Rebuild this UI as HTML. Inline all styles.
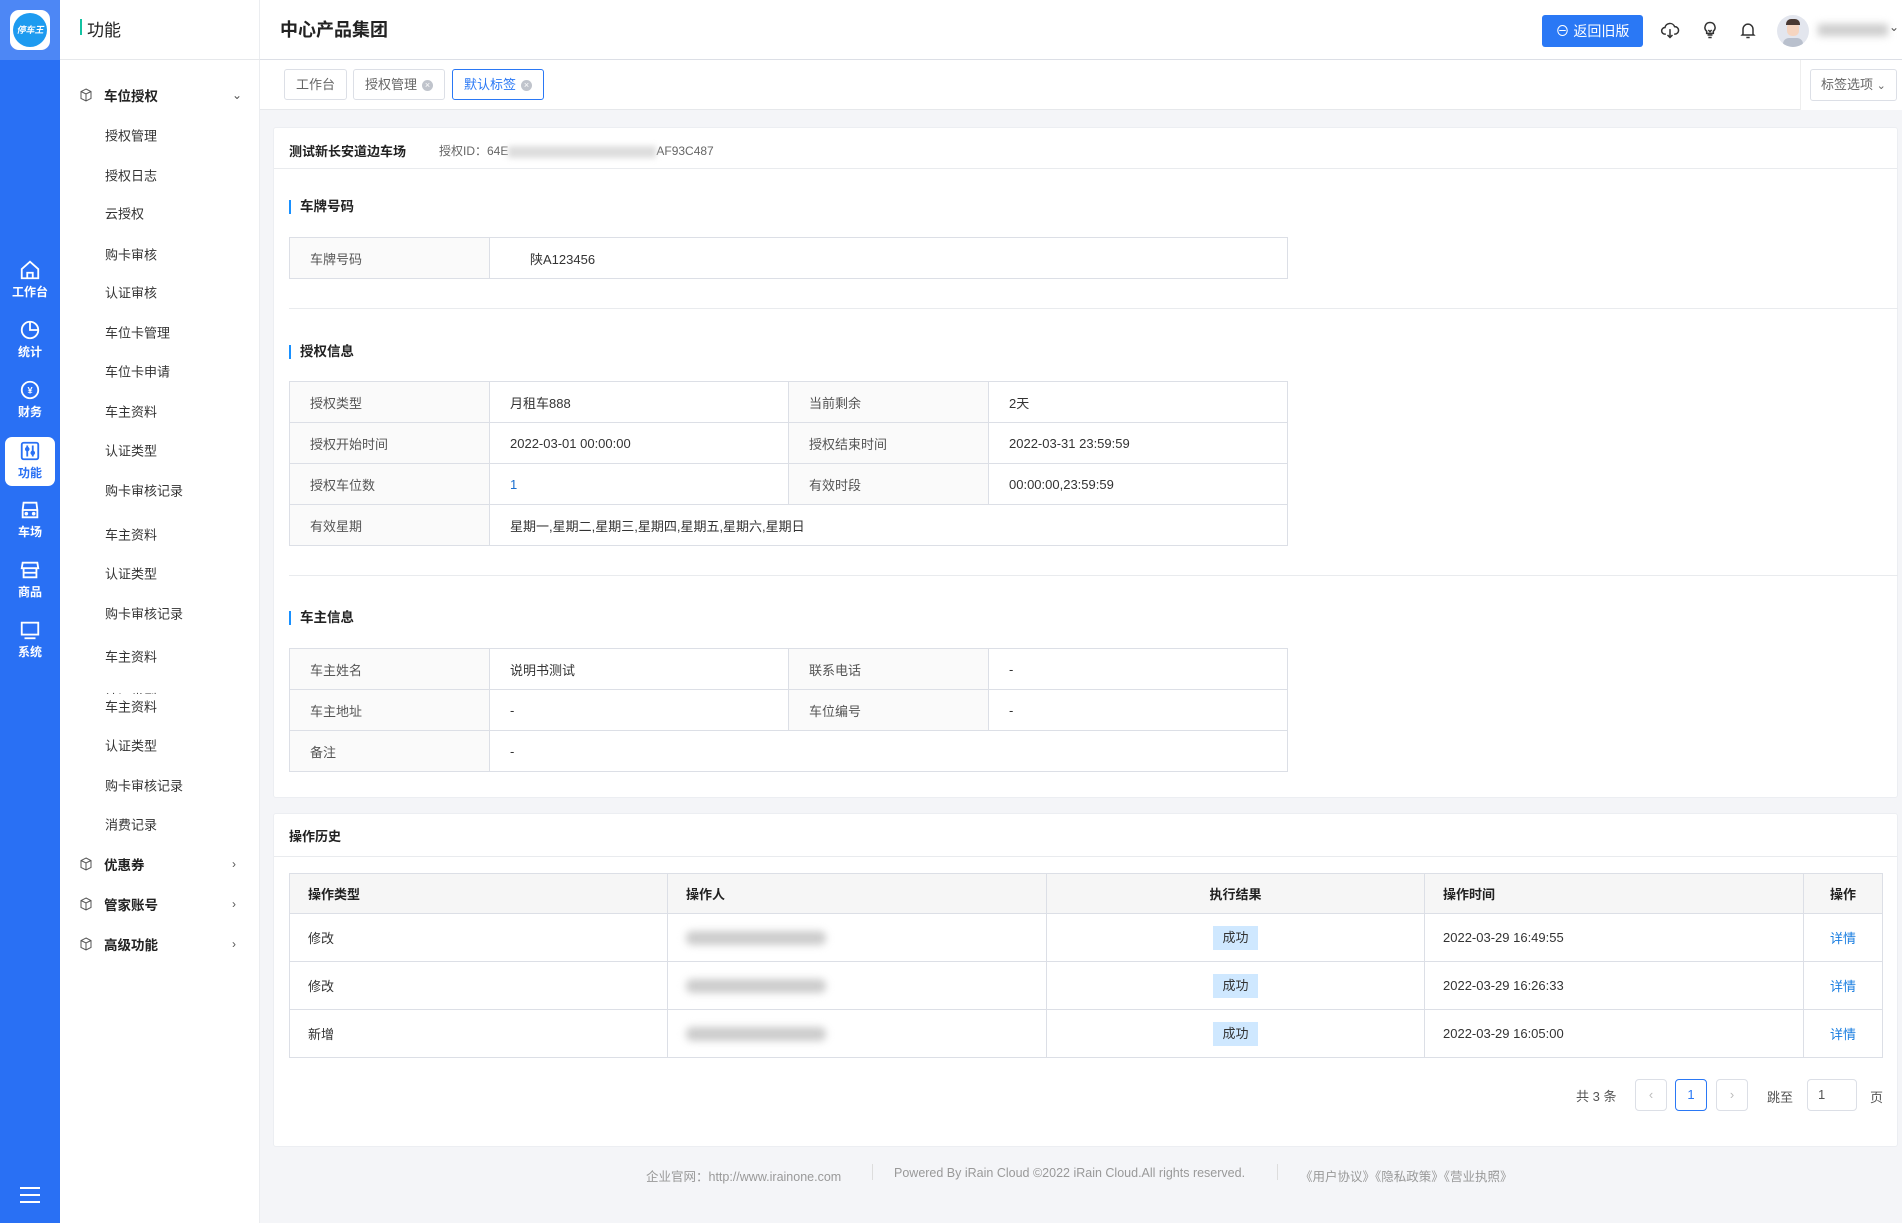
<!DOCTYPE html>
<html><head><meta charset="utf-8"><style>
*{box-sizing:border-box;margin:0;padding:0}
body{width:1902px;height:1223px;position:relative;overflow:hidden;background:#f4f5f8;font-family:"Liberation Sans","Noto Sans CJK SC",sans-serif;font-size:13px;color:#333}
.a{position:absolute;white-space:nowrap}
.side{left:0;top:0;width:60px;height:1223px;background:#2970f4}
.logo{left:0;top:0;width:60px;height:60px;background:#4d87f5}
.logo div{position:absolute;left:10px;top:10px;width:40px;height:40px;border-radius:9px;background:#fff}
.logo span{position:absolute;left:13px;top:13px;width:34px;height:34px;border-radius:50%;background:#1d9bf0;color:#fff;font-size:9px;font-weight:bold;line-height:34px;text-align:center;font-style:italic}
.ni{left:0;width:60px;text-align:center;color:#fff;font-size:12px;font-weight:bold}
.ni svg{display:block;margin:0 auto 2px}
.menu{left:60px;top:0;width:200px;height:1223px;background:#fff;border-right:1px solid #ebedf0}
.mh{left:60px;top:0;width:200px;height:60px;border-bottom:1px solid #e6e8eb}
.mi{left:105px;font-size:13px;color:#333;transform:translateY(-50%)}
.mg{left:104px;font-size:13.5px;font-weight:bold;color:#222;transform:translateY(-50%)}
.ic{left:79px;transform:translateY(-50%)}
.chev{left:232px;transform:translateY(-50%);color:#555;font-size:12px}
.top{left:260px;top:0;width:1642px;height:60px;background:#fff;border-bottom:1px solid #dcdfe6}
.tabs{left:260px;top:60px;width:1642px;height:50px;background:#fff;border-bottom:1px solid #e6e8eb}
.tab{top:69px;height:31px;border:1px solid #dcdfe6;border-radius:3px;padding:0 11px;line-height:29px;color:#666;font-size:13px;background:#fff}
.x{display:inline-block;width:11px;height:11px;border-radius:50%;background:#c0c4cc;color:#fff;font-size:9px;line-height:11px;text-align:center;margin-left:5px;vertical-align:middle}
.card{background:#fff;border:1px solid #eceef2;border-radius:3px}
.st{font-size:13.5px;font-weight:bold;color:#222;border-left:2px solid #1890ff;padding-left:9px;line-height:14px}
table{border-collapse:collapse;position:absolute}
td{border:1px solid #dcdfe6;font-size:13px;color:#333;padding-left:20px;height:41px}
td.l{background:#fafafa;color:#555}
.hr{height:1px;background:#e9ebee}
.ht td{height:48px;padding-left:18px}
.ht tr:first-child td{background:#f6f6f6;font-weight:bold;color:#222;height:40px}
.ok{display:inline-block;background:#cfe8ff;color:#333;padding:0 9px;line-height:24px;font-size:13px}
.blur{display:inline-block;width:140px;height:14px;background:#ccc;filter:blur(4px);border-radius:6px;vertical-align:middle}
.pg{top:1079px;width:32px;height:32px;border:1px solid #dcdfe6;border-radius:4px;text-align:center;line-height:30px;color:#bbb;background:#fff}
.ft{top:1166px;font-size:12.5px;color:#999}
</style></head><body>
<div class="a side"></div>
<div class="a logo"><div></div><span>停车王</span></div>

<div class="a ni" style="top:259px"><svg width="22" height="22" viewBox="0 0 24 24" fill="none" stroke="#fff" stroke-width="2"><path d="M3 11L12 3l9 8v10H3z"/><path d="M9 21v-6h6v6"/></svg>工作台</div>
<div class="a ni" style="top:319px"><svg width="22" height="22" viewBox="0 0 24 24" fill="none" stroke="#fff" stroke-width="2"><circle cx="12" cy="12" r="9"/><path d="M12 3v9h9"/></svg>统计</div>
<div class="a ni" style="top:379px"><svg width="22" height="22" viewBox="0 0 24 24" fill="none" stroke="#fff" stroke-width="2"><circle cx="12" cy="12" r="9"/><text x="12" y="16" fill="#fff" stroke="none" font-size="10" text-anchor="middle" font-weight="bold">¥</text></svg>财务</div>
<div class="a" style="left:5px;top:437px;width:50px;height:49px;background:#fff;border-radius:7px"></div>
<div class="a ni" style="top:440px;color:#2970f4"><svg width="22" height="22" viewBox="0 0 24 24" fill="none" stroke="#2970f4" stroke-width="2"><rect x="3" y="3" width="18" height="18" rx="2"/><path d="M9 6v12M15 6v12"/><circle cx="9" cy="10" r="1.5"/><circle cx="15" cy="14" r="1.5"/></svg>功能</div>
<div class="a ni" style="top:499px"><svg width="22" height="22" viewBox="0 0 24 24" fill="none" stroke="#fff" stroke-width="2"><path d="M5 4h14l1 8v8H4v-8z"/><path d="M4 12h16"/><circle cx="8" cy="16" r="1"/><circle cx="16" cy="16" r="1"/></svg>车场</div>
<div class="a ni" style="top:559px"><svg width="22" height="22" viewBox="0 0 24 24" fill="none" stroke="#fff" stroke-width="2"><path d="M4 4h16l1 6H3z"/><path d="M5 10v10h14V10"/><path d="M5 15h14"/></svg>商品</div>
<div class="a ni" style="top:619px"><svg width="22" height="22" viewBox="0 0 24 24" fill="none" stroke="#fff" stroke-width="2"><rect x="3" y="4" width="18" height="13"/><path d="M6 21h12"/></svg>系统</div>
<div class="a" style="left:19px;top:1186px"><svg width="22" height="18" viewBox="0 0 22 18" stroke="#fff" stroke-width="2"><path d="M1 2h20M1 9h20M1 16h20"/></svg></div>

<div class="a menu"></div>
<div class="a mh"></div>
<div class="a" style="left:80px;top:19px;width:2px;height:16px;background:#13c2a2"></div>
<div class="a" style="left:87px;top:16px;font-size:17px;color:#222">功能</div>

<svg class="a ic" style="top:95px" width="14" height="14" viewBox="0 0 14 14" fill="none" stroke="#555"><path d="M7 1l5 2.5v7L7 13 2 10.5v-7z"/><path d="M2 3.5L7 6l5-2.5M7 6v7"/></svg>
<div class="a mg" style="top:95px">车位授权</div><div class="a chev" style="top:95px">⌄</div>
<div class="a mi" style="top:135px">授权管理</div>
<div class="a mi" style="top:175px">授权日志</div>
<div class="a mi" style="top:213px">云授权</div>
<div class="a mi" style="top:254px">购卡审核</div>
<div class="a mi" style="top:292px">认证审核</div>
<div class="a mi" style="top:332px">车位卡管理</div>
<div class="a mi" style="top:371px">车位卡申请</div>
<div class="a mi" style="top:411px">车主资料</div>
<div class="a mi" style="top:450px">认证类型</div>
<div class="a mi" style="top:490px">购卡审核记录</div>
<div class="a mi" style="top:534px">车主资料</div>
<div class="a mi" style="top:573px">认证类型</div>
<div class="a mi" style="top:613px">购卡审核记录</div>
<div class="a mi" style="top:656px">车主资料</div>
<div class="a" style="left:105px;top:689px;height:5px;overflow:hidden;font-size:13px;color:#333">认证类型</div>
<div class="a mi" style="top:706px">车主资料</div>
<div class="a mi" style="top:745px">认证类型</div>
<div class="a mi" style="top:785px">购卡审核记录</div>
<div class="a mi" style="top:824px">消费记录</div>
<svg class="a ic" style="top:864px" width="14" height="14" viewBox="0 0 14 14" fill="none" stroke="#555"><path d="M7 1l5 2.5v7L7 13 2 10.5v-7z"/><path d="M2 3.5L7 6l5-2.5M7 6v7"/></svg>
<div class="a mg" style="top:864px">优惠券</div><div class="a chev" style="top:864px">›</div>
<svg class="a ic" style="top:904px" width="14" height="14" viewBox="0 0 14 14" fill="none" stroke="#555"><path d="M7 1l5 2.5v7L7 13 2 10.5v-7z"/><path d="M2 3.5L7 6l5-2.5M7 6v7"/></svg>
<div class="a mg" style="top:904px">管家账号</div><div class="a chev" style="top:904px">›</div>
<svg class="a ic" style="top:944px" width="14" height="14" viewBox="0 0 14 14" fill="none" stroke="#555"><path d="M7 1l5 2.5v7L7 13 2 10.5v-7z"/><path d="M2 3.5L7 6l5-2.5M7 6v7"/></svg>
<div class="a mg" style="top:944px">高级功能</div><div class="a chev" style="top:944px">›</div>

<div class="a top"></div>
<div class="a" style="left:280px;top:16px;font-size:18px;font-weight:bold;color:#222">中心产品集团</div>
<div class="a" style="left:1542px;top:15px;width:101px;height:32px;background:#2a78f5;border-radius:3px;color:#fff;font-size:14px;line-height:32px;text-align:center">⊖ 返回旧版</div>
<svg class="a" style="left:1660px;top:20px" width="20" height="20" viewBox="0 0 24 24" fill="none" stroke="#333" stroke-width="1.8"><path d="M7 17H6a4 4 0 010-8 6 6 0 0111.5-1A4.5 4.5 0 0118 17h-1"/><path d="M12 11v10M9 18l3 3 3-3"/></svg>
<svg class="a" style="left:1700px;top:20px" width="20" height="20" viewBox="0 0 24 24" fill="none" stroke="#333" stroke-width="1.8"><path d="M9 18h6M10 21h4M12 3a6 6 0 00-4 10.5V16h8v-2.5A6 6 0 0012 3z"/><path d="M10 12l2 2 2-2"/></svg>
<svg class="a" style="left:1738px;top:20px" width="20" height="20" viewBox="0 0 24 24" fill="none" stroke="#333" stroke-width="1.8"><path d="M6 17V11a6 6 0 0112 0v6l1 1H5z"/><path d="M10 21h4"/></svg>
<div class="a" style="left:1777px;top:15px;width:32px;height:32px;border-radius:50%;background:#e3e6ee;overflow:hidden"><div style="position:absolute;left:10px;top:7px;width:12px;height:14px;border-radius:5px;background:#f6d5c0"></div><div style="position:absolute;left:9px;top:4px;width:14px;height:6px;border-radius:5px 5px 0 0;background:#4a3a34"></div><div style="position:absolute;left:6px;top:23px;width:20px;height:12px;border-radius:8px;background:#b9c0cd"></div></div>
<div class="a" style="left:1818px;top:24px;width:70px;height:12px;background:#ccc;filter:blur(4px)"></div>
<div class="a" style="left:1889px;top:20px;font-size:12px;color:#555">⌄</div>

<div class="a tabs"></div>
<div class="a tab" style="left:284px">工作台</div>
<div class="a tab" style="left:353px">授权管理<span class="x">×</span></div>
<div class="a tab" style="left:452px;border-color:#2a78f5;color:#2a78f5">默认标签<span class="x">×</span></div>
<div class="a" style="left:1800px;top:60px;width:102px;height:50px;background:#fff;border-left:1px solid #eee"></div>
<div class="a tab" style="left:1810px;height:32px;padding:0 10px;color:#666">标签选项 <span style="font-size:11px">⌄</span></div>

<div class="a card" style="left:273px;top:127px;width:1625px;height:671px"></div>
<div class="a" style="left:289px;top:141px;font-size:13px;font-weight:bold;color:#222">测试新长安道边车场</div>
<div class="a" style="left:439px;top:142px;font-size:12px;color:#666">授权ID：64E<span style="display:inline-block;width:148px;height:12px;background:#ddd;filter:blur(3px);vertical-align:middle"></span>AF93C487</div>
<div class="a hr" style="left:274px;top:168px;width:1623px"></div>

<div class="a st" style="left:289px;top:200px">车牌号码</div>
<table style="left:289px;top:237px;width:999px"><tr><td class="l" style="width:200px;height:41px">车牌号码</td><td style="padding-left:40px">陕A123456</td></tr></table>
<div class="a hr" style="left:289px;top:308px;width:1609px"></div>

<div class="a st" style="left:289px;top:345px">授权信息</div>
<table style="left:289px;top:381px;width:999px">
<tr><td class="l" style="width:200px">授权类型</td><td style="width:299px">月租车888</td><td class="l" style="width:200px">当前剩余</td><td>2天</td></tr>
<tr><td class="l">授权开始时间</td><td>2022-03-01 00:00:00</td><td class="l">授权结束时间</td><td>2022-03-31 23:59:59</td></tr>
<tr><td class="l">授权车位数</td><td style="color:#1a6fd0">1</td><td class="l">有效时段</td><td>00:00:00,23:59:59</td></tr>
<tr><td class="l">有效星期</td><td colspan="3">星期一,星期二,星期三,星期四,星期五,星期六,星期日</td></tr>
</table>
<div class="a hr" style="left:289px;top:575px;width:1609px"></div>

<div class="a st" style="left:289px;top:611px">车主信息</div>
<table style="left:289px;top:648px;width:999px">
<tr><td class="l" style="width:200px">车主姓名</td><td style="width:299px">说明书测试</td><td class="l" style="width:200px">联系电话</td><td>-</td></tr>
<tr><td class="l">车主地址</td><td>-</td><td class="l">车位编号</td><td>-</td></tr>
<tr><td class="l">备注</td><td colspan="3">-</td></tr>
</table>

<div class="a card" style="left:273px;top:813px;width:1625px;height:334px"></div>
<div class="a" style="left:289px;top:826px;font-size:13px;font-weight:bold;color:#222">操作历史</div>
<div class="a hr" style="left:274px;top:856px;width:1623px"></div>
<table class="ht" style="left:289px;top:873px;width:1594px">
<tr><td style="width:378px">操作类型</td><td style="width:379px">操作人</td><td style="width:378px;text-align:center;padding:0">执行结果</td><td style="width:379px">操作时间</td><td style="padding-left:26px">操作</td></tr>
<tr><td>修改</td><td><span class="blur"></span></td><td style="text-align:center;padding:0"><span class="ok">成功</span></td><td>2022-03-29 16:49:55</td><td style="padding-left:26px;color:#1a7ee0">详情</td></tr>
<tr><td>修改</td><td><span class="blur"></span></td><td style="text-align:center;padding:0"><span class="ok">成功</span></td><td>2022-03-29 16:26:33</td><td style="padding-left:26px;color:#1a7ee0">详情</td></tr>
<tr><td>新增</td><td><span class="blur"></span></td><td style="text-align:center;padding:0"><span class="ok">成功</span></td><td>2022-03-29 16:05:00</td><td style="padding-left:26px;color:#1a7ee0">详情</td></tr>
</table>

<div class="a" style="left:1576px;top:1086px;font-size:13px;color:#555">共 3 条</div>
<div class="a pg" style="left:1635px">‹</div>
<div class="a pg" style="left:1675px;border-color:#2a78f5;color:#2a78f5">1</div>
<div class="a pg" style="left:1716px">›</div>
<div class="a" style="left:1767px;top:1087px;font-size:13px;color:#555">跳至</div>
<div class="a pg" style="left:1807px;width:50px;text-align:left;padding-left:10px;color:#555">1</div>
<div class="a" style="left:1870px;top:1087px;font-size:13px;color:#555">页</div>

<div class="a ft" style="left:646px">企业官网：http://www.irainone.com</div>
<div class="a" style="left:872px;top:1164px;width:1px;height:16px;background:#ddd"></div>
<div class="a ft" style="left:894px">Powered By iRain Cloud ©2022 iRain Cloud.All rights reserved.</div>
<div class="a" style="left:1277px;top:1164px;width:1px;height:16px;background:#ddd"></div>
<div class="a ft" style="left:1300px">《用户协议》《隐私政策》《营业执照》</div>
</body></html>
